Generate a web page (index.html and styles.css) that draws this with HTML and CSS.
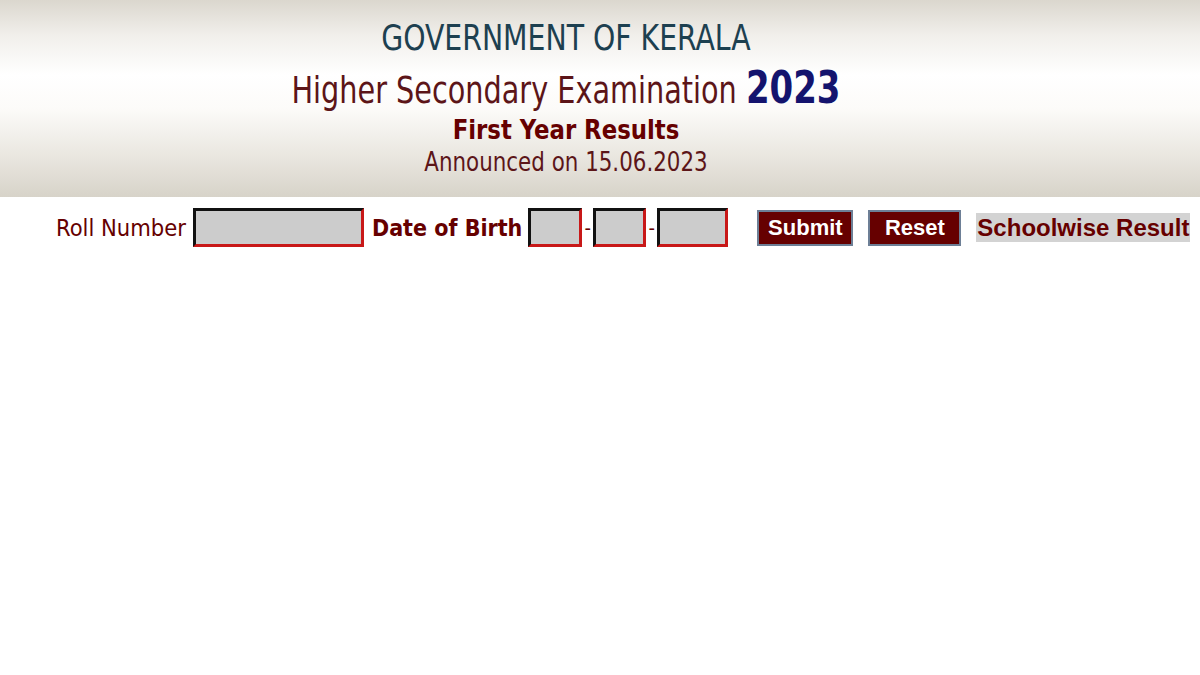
FILE: index.html
```html
<!DOCTYPE html>
<html>
<head>
<meta charset="utf-8">
<link rel="stylesheet" href="styles.css">
</head>
<body>
<header class="banner">
  <div class="gov">GOVERNMENT OF KERALA</div>
  <div class="exam">Higher Secondary Examination <span class="year">2023</span></div>
  <div class="first">First Year Results</div>
  <div class="announced">Announced on 15.06.2023</div>
</header>
<form class="form-row">
  <label class="lbl">Roll Number</label>
  <input class="box roll" type="text">
  <label class="lbl strong">Date of Birth</label>
  <input class="box dd" type="text"><span class="dash">-</span><input class="box mm" type="text"><span class="dash">-</span><input class="box yy" type="text">
  <button class="btn submit" type="button">Submit</button>
  <button class="btn reset" type="button">Reset</button>
  <span class="school">Schoolwise Result</span>
</form>
</body>
</html>
```
FILE: styles.css
```css
html, body {
  margin: 0;
  padding: 0;
  background: #fff;
}
body {
  width: 1200px;
  height: 675px;
  overflow: hidden;
  font-family: "DejaVu Sans Condensed", "DejaVu Sans", sans-serif;
}
.banner {
  height: 197px;
  box-sizing: border-box;
  padding: 9px 68px 0 0;
  text-align: center;
  background: linear-gradient(to bottom, #dbd7ce 0%, #f1efeb 18%, #ffffff 38%, #fcfbf9 55%, #e9e6df 80%, #d7d3c9 100%);
}
.gov {
  font-size: 35px;
  color: #1d4050;
  line-height: 58px;
  transform: scaleX(0.9);
}
.exam {
  font-size: 38px;
  color: #5c1518;
  line-height: 47px;
  transform: scaleX(0.84);
}
.year {
  font-size: 45px;
  font-weight: bold;
  color: #14146e;
  line-height: 40px;
}
.first {
  font-size: 27px;
  font-weight: bold;
  color: #660000;
  line-height: 32px;
  transform: scaleX(0.94);
}
.announced {
  font-size: 26px;
  color: #5c1518;
  line-height: 33px;
  transform: scaleX(0.915);
}
.form-row {
  display: flex;
  align-items: center;
  margin: 11px 0 0 56px;
  height: 39px;
}
.lbl {
  font-size: 23.5px;
  color: #660000;
  margin-right: 7px;
}
.lbl.strong {
  font-weight: bold;
  font-size: 23px;
  margin-left: 8px;
  margin-right: 6px;
}
.box {
  box-sizing: border-box;
  height: 39px;
  background: #cccccc;
  border-style: solid;
  border-width: 3px;
  border-color: #111 #c81818 #c81818 #111;
  margin: 0;
  padding: 0;
}
.roll { width: 171px; }
.dd { width: 54px; }
.mm { width: 53px; }
.yy { width: 71px; }
.dash {
  font-size: 20px;
  color: #660000;
  width: 11px;
  text-align: center;
}
.btn {
  box-sizing: border-box;
  height: 36px;
  padding: 0;
  background: #660000;
  color: #fff;
  border: 2px solid #6d7f96;
  font-family: "Liberation Sans", Arial, sans-serif;
  font-weight: bold;
  font-size: 22px;
}
.submit { width: 96px; margin-left: 29px; }
.reset { width: 93px; margin-left: 15px; }
.school {
  margin-left: 15px;
  background: #d3d3d3;
  color: #660000;
  font-family: "Liberation Sans", Arial, sans-serif;
  font-weight: bold;
  font-size: 24px;
  padding: 2px 1px;
  line-height: 25px;
}
```
